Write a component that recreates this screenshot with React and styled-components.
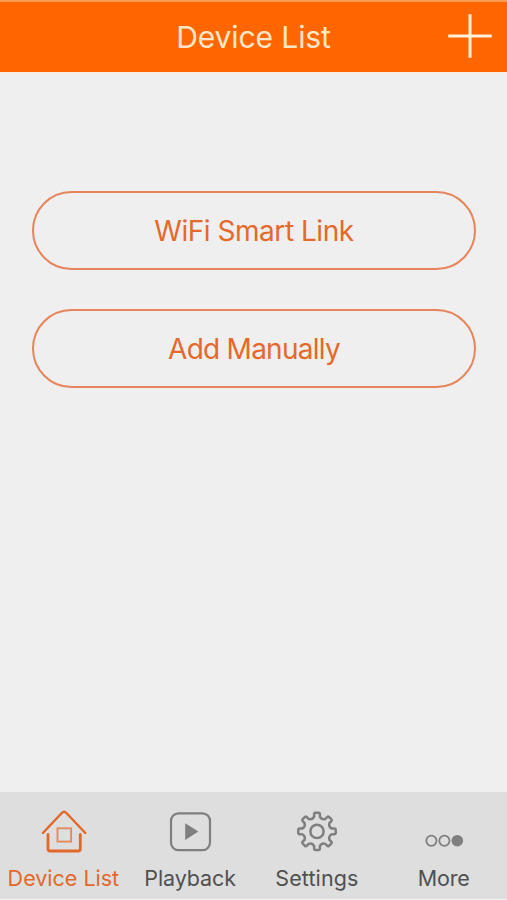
import React from "react";
import styled, { createGlobalStyle } from "styled-components";

const GlobalStyle = createGlobalStyle`
  * { box-sizing: border-box; }
  html, body { margin: 0; padding: 0; background: #efefef; }
  button { font: inherit; background: none; border: 0; padding: 0; }
`;

const Screen = styled.div`
  display: flex;
  flex-direction: column;
  width: 100%;
  height: 900px;
  background: #efefef;
  font-family: Inter, "Liberation Sans", sans-serif;
`;

const Header = styled.header`
  display: grid;
  grid-template-columns: 74px 1fr 74px;
  align-items: start;
  height: 73px;
  border-top: 2px solid #ff9956;
  border-bottom: 1px solid #fbe9dc;
  background: #ff6600;
`;

const Title = styled.h1`
  grid-column: 2;
  margin: 17px 0 0;
  text-align: center;
  font-size: 30px;
  line-height: 36px;
  font-weight: 400;
  letter-spacing: ${(p) => p.$tracking}px;
  color: #ffe6c8;
`;

const AddButton = styled.button`
  display: flex;
  justify-content: center;
  margin-top: 11.5px;
  color: #fff0dc;
`;

const Content = styled.main`
  flex: 1;
  display: flex;
  flex-direction: column;
  gap: 39px;
  padding: 118px 31px 0 32px;
`;

const PillButton = styled.button`
  height: 79px;
  padding-top: 1px;
  border: 2px solid #e6855c;
  border-radius: 40px;
  color: #e4692b;
  font-size: 28px;
  line-height: 34px;
  letter-spacing: ${(p) => p.$tracking}px;
`;

const TabBar = styled.nav`
  display: grid;
  grid-template-columns: repeat(4, 1fr);
  height: 108px;
  padding-top: 16px;
  background: #dedede;
  border-bottom: 1px solid #f3f3f3;
`;

const Tab = styled.button`
  display: flex;
  flex-direction: column;
  align-items: center;
  gap: 9px;
  color: ${(p) => (p.$active ? "#e2682a" : "#7f7f7f")};
`;

const TabLabel = styled.span`
  font-size: 21.5px;
  line-height: 26px;
  white-space: nowrap;
  letter-spacing: ${(p) => p.$tracking}px;
  color: ${(p) => (p.$active ? "#e2682a" : "#505050")};
`;

const TabIcon = styled.svg`
  display: block;
  width: 48px;
  height: 48px;
  fill: none;
  stroke: currentColor;
  stroke-width: 2.2;
  stroke-linecap: round;
  stroke-linejoin: round;
`;

const HomeIcon = () => (
  <TabIcon viewBox="0 0 48 48">
    <path d="M3.9 25 22.8 5Q25.1 2.4 27.4 5L46.3 25" strokeWidth="2.4" />
    <path d="M9 26.5V41Q9 43 11 43H39.3Q41.3 43 41.3 41V26.5" strokeWidth="2.8" />
    <rect x="18.5" y="20.3" width="13.6" height="13.3" strokeWidth="1.9" strokeLinejoin="miter" stroke="#e48a5e" />
  </TabIcon>
);

const PlaybackIcon = () => (
  <TabIcon viewBox="0 0 48 48">
    <rect x="5" y="5.3" width="39" height="36.8" rx="7.5" />
    <path d="M19.2 15.3 32.4 23.6 19.2 31.9Z" fill="currentColor" stroke="none" />
  </TabIcon>
);

// One tooth and the valley after it, repeated at 45 degree steps around the centre.
const gearPath = () => {
  const outline = [
    [17.4, -9.5], [18.8, -9], [18.8, -5.5],
    [18.8, 5.5], [18.8, 9], [17.4, 9.5],
    [15, 11], [12.3, 22.5], [15, 34],
  ];
  const at = ([r, deg], step) => {
    const a = ((deg + step * 45 - 90) * Math.PI) / 180;
    return `${(24 + r * Math.cos(a)).toFixed(2)} ${(23.4 + r * Math.sin(a)).toFixed(2)}`;
  };
  let d = "";
  for (let i = 0; i < 8; i += 1) {
    const [a, b, c, e, f, g, h, v, w] = outline.map((p) => at(p, i));
    d += `${i ? "L" : "M"}${a}Q${b} ${c}L${e}Q${f} ${g}L${h}Q${v} ${w}`;
  }
  return `${d}Z`;
};

const SettingsIcon = () => (
  <TabIcon viewBox="0 0 48 48">
    <path d={gearPath()} strokeWidth="2.5" />
    <circle cx="24" cy="23.4" r="6.6" strokeWidth="2.5" />
  </TabIcon>
);

const MoreIcon = () => (
  <TabIcon viewBox="0 0 48 48">
    <circle cx="11.4" cy="32.7" r="5.1" strokeWidth="1.8" />
    <circle cx="24.4" cy="32.7" r="5.1" strokeWidth="1.8" />
    <circle cx="37.3" cy="32.7" r="5.8" fill="currentColor" stroke="none" />
  </TabIcon>
);

const PlusIcon = styled.svg`
  display: block;
  width: 44px;
  height: 44px;
  stroke: currentColor;
  stroke-width: 3;
`;

const tabs = [
  { label: "Device List", Icon: HomeIcon, tracking: 0, active: true },
  { label: "Playback", Icon: PlaybackIcon, tracking: -0.1 },
  { label: "Settings", Icon: SettingsIcon, tracking: 0.1 },
  { label: "More", Icon: MoreIcon, tracking: -0.2 },
];

export default function App() {
  return (
    <Screen>
      <GlobalStyle />
      <Header>
        <Title $tracking={-0.1}>Device List</Title>
        <AddButton aria-label="Add device">
          <PlusIcon viewBox="0 0 44 44">
            <path d="M.3 22H43.7M22 .3V43.7" />
          </PlusIcon>
        </AddButton>
      </Header>
      <Content>
        <PillButton $tracking={-0.47}>WiFi Smart Link</PillButton>
        <PillButton $tracking={-0.75}>Add Manually</PillButton>
      </Content>
      <TabBar>
        {tabs.map(({ label, Icon, tracking, active }) => (
          <Tab key={label} $active={active}>
            <Icon />
            <TabLabel $active={active} $tracking={tracking}>{label}</TabLabel>
          </Tab>
        ))}
      </TabBar>
    </Screen>
  );
}
